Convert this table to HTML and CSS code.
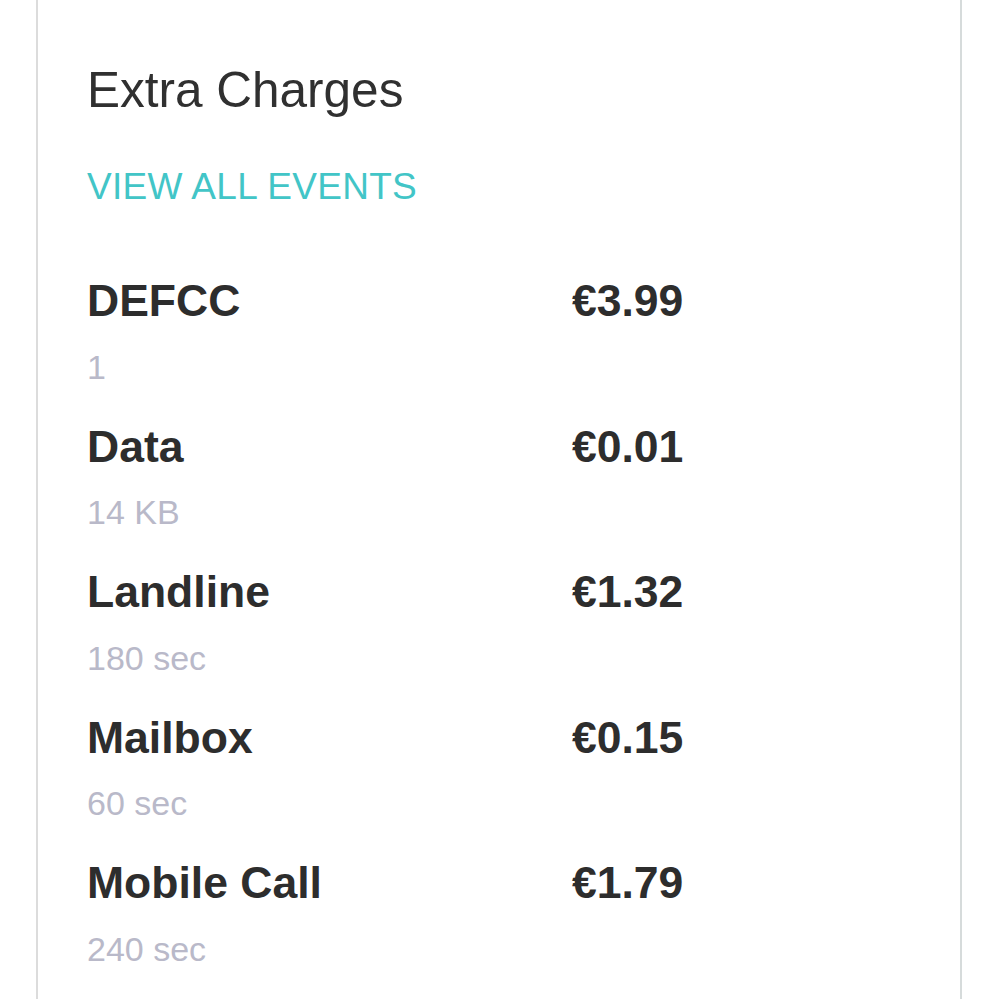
FILE: index.html
```html
<!DOCTYPE html>
<html lang="en">
<head>
<meta charset="utf-8">
<title>Extra Charges</title>
<link rel="stylesheet" href="styles.css">
</head>
<body>
<section class="card">
  <h2 class="card-title">Extra Charges</h2>
  <a class="view-all" href="#">VIEW ALL EVENTS</a>
  <ul class="charges">
    <li class="charge">
      <span class="charge-name">DEFCC</span>
      <span class="charge-price">€3.99</span>
      <span class="charge-qty">1</span>
    </li>
    <li class="charge">
      <span class="charge-name">Data</span>
      <span class="charge-price">€0.01</span>
      <span class="charge-qty">14 KB</span>
    </li>
    <li class="charge">
      <span class="charge-name">Landline</span>
      <span class="charge-price">€1.32</span>
      <span class="charge-qty">180 sec</span>
    </li>
    <li class="charge">
      <span class="charge-name">Mailbox</span>
      <span class="charge-price">€0.15</span>
      <span class="charge-qty">60 sec</span>
    </li>
    <li class="charge">
      <span class="charge-name">Mobile Call</span>
      <span class="charge-price">€1.79</span>
      <span class="charge-qty">240 sec</span>
    </li>
  </ul>
</section>
</body>
</html>
```

FILE: styles.css
```css
html, body {
  margin: 0;
  padding: 0;
  background: #ffffff;
}

body {
  font-family: "Liberation Sans", Arial, sans-serif;
  color: #2e2e2e;
  overflow: hidden;
}

.card {
  box-sizing: border-box;
  margin-left: 36px;
  width: 926px;
  min-height: 999px;
  border-left: 2px solid #dcdcdc;
  border-right: 2px solid #d6dbdb;
  padding: 62px 0 0 49px;
  display: flex;
  flex-direction: column;
  align-items: flex-start;
}

.card-title {
  margin: 0;
  font-size: 49.5px;
  line-height: 56px;
  font-weight: 400;
  color: #303030;
}

.view-all {
  margin-top: 47px;
  font-size: 37px;
  line-height: 44px;
  letter-spacing: 0.3px;
  color: #42c5c7;
  text-decoration: none;
}

.charges {
  list-style: none;
  margin: 67px 0 0 0;
  padding: 0;
  display: flex;
  flex-direction: column;
  gap: 36px;
}

.charge {
  display: grid;
  grid-template-columns: 485px auto;
  row-gap: 21.5px;
}

.charge-name,
.charge-price {
  font-size: 44.5px;
  line-height: 50px;
  font-weight: 700;
  color: #2d2d2d;
}

.charge-qty {
  grid-column: 1 / 2;
  font-size: 34px;
  line-height: 38px;
  color: #b9b9c9;
}
```
